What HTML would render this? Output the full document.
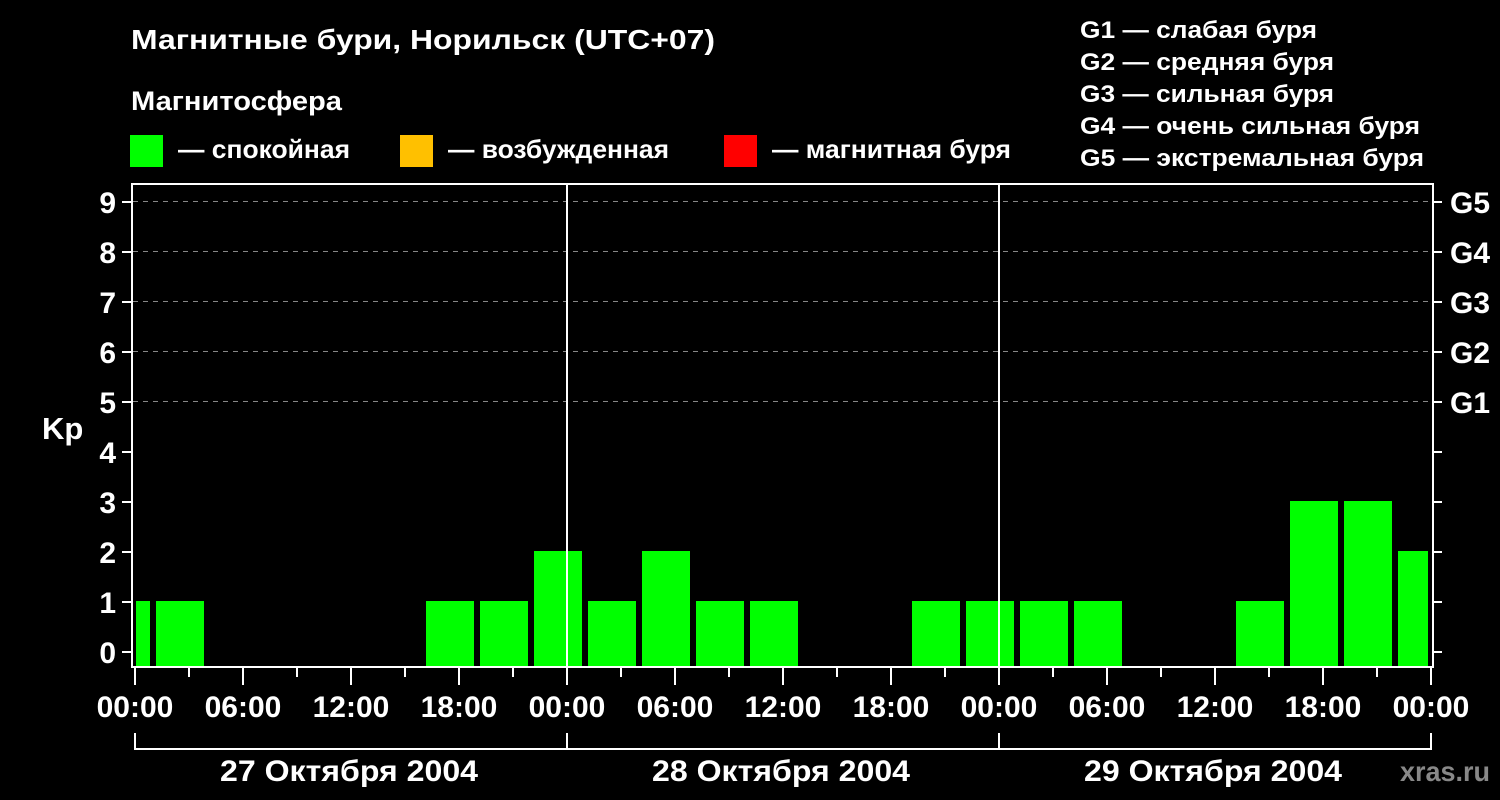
<!DOCTYPE html>
<html><head><meta charset="utf-8"><style>
html,body{margin:0;padding:0;background:#000;}
svg{display:block}
text{font-family:"Liberation Sans",Arial,sans-serif;font-weight:bold;fill:#fff}
</style></head><body>
<svg width="1500" height="800" viewBox="0 0 1500 800" xmlns="http://www.w3.org/2000/svg">
<rect width="1500" height="800" fill="#000"/>
<text x="131" y="49" font-size="28" textLength="584" lengthAdjust="spacingAndGlyphs">Магнитные бури, Норильск (UTC+07)</text>
<text x="131" y="110" font-size="27" textLength="211" lengthAdjust="spacingAndGlyphs">Магнитосфера</text>
<rect x="130" y="135" width="33" height="32" fill="#00ff00"/>
<text x="178" y="158" font-size="26" textLength="172" lengthAdjust="spacingAndGlyphs">— спокойная</text>
<rect x="400" y="135" width="33" height="32" fill="#ffc000"/>
<text x="448" y="158" font-size="26" textLength="221" lengthAdjust="spacingAndGlyphs">— возбужденная</text>
<rect x="724" y="135" width="33" height="32" fill="#ff0000"/>
<text x="772" y="158" font-size="26" textLength="239" lengthAdjust="spacingAndGlyphs">— магнитная буря</text>
<g font-size="24">
<text x="1080" y="38" textLength="237" lengthAdjust="spacingAndGlyphs">G1 — слабая буря</text>
<text x="1080" y="70" textLength="254" lengthAdjust="spacingAndGlyphs">G2 — средняя буря</text>
<text x="1080" y="102" textLength="254" lengthAdjust="spacingAndGlyphs">G3 — сильная буря</text>
<text x="1080" y="134" textLength="340" lengthAdjust="spacingAndGlyphs">G4 — очень сильная буря</text>
<text x="1080" y="166" textLength="344" lengthAdjust="spacingAndGlyphs">G5 — экстремальная буря</text>
</g>
<g stroke="#888" stroke-width="1" stroke-dasharray="5,5">
<line x1="133" y1="201.5" x2="1433" y2="201.5"/>
<line x1="133" y1="251.5" x2="1433" y2="251.5"/>
<line x1="133" y1="301.5" x2="1433" y2="301.5"/>
<line x1="133" y1="351.5" x2="1433" y2="351.5"/>
<line x1="133" y1="401.5" x2="1433" y2="401.5"/>
</g>
<g fill="#00ff00">
<rect x="136" y="601" width="14" height="66"/>
<rect x="156" y="601" width="48" height="66"/>
<rect x="426" y="601" width="48" height="66"/>
<rect x="480" y="601" width="48" height="66"/>
<rect x="534" y="551" width="48" height="116"/>
<rect x="588" y="601" width="48" height="66"/>
<rect x="642" y="551" width="48" height="116"/>
<rect x="696" y="601" width="48" height="66"/>
<rect x="750" y="601" width="48" height="66"/>
<rect x="912" y="601" width="48" height="66"/>
<rect x="966" y="601" width="48" height="66"/>
<rect x="1020" y="601" width="48" height="66"/>
<rect x="1074" y="601" width="48" height="66"/>
<rect x="1236" y="601" width="48" height="66"/>
<rect x="1290" y="501" width="48" height="166"/>
<rect x="1344" y="501" width="48" height="166"/>
<rect x="1398" y="551" width="30" height="116"/>
</g>
<g stroke="#fff" stroke-width="2" fill="none">
<line x1="131" y1="184" x2="1434" y2="184"/>
<line x1="132" y1="183" x2="132" y2="668"/>
<line x1="1433" y1="183" x2="1433" y2="668"/>
<line x1="131" y1="667" x2="1434" y2="667"/>
<line x1="567" y1="183" x2="567" y2="667"/>
<line x1="999" y1="183" x2="999" y2="667"/>
</g>
<g stroke="#fff" stroke-width="2">
<line x1="122" y1="202" x2="131" y2="202"/><line x1="1434" y1="202" x2="1442" y2="202"/>
<line x1="122" y1="252" x2="131" y2="252"/><line x1="1434" y1="252" x2="1442" y2="252"/>
<line x1="122" y1="302" x2="131" y2="302"/><line x1="1434" y1="302" x2="1442" y2="302"/>
<line x1="122" y1="352" x2="131" y2="352"/><line x1="1434" y1="352" x2="1442" y2="352"/>
<line x1="122" y1="402" x2="131" y2="402"/><line x1="1434" y1="402" x2="1442" y2="402"/>
<line x1="122" y1="452" x2="131" y2="452"/><line x1="1434" y1="452" x2="1442" y2="452"/>
<line x1="122" y1="502" x2="131" y2="502"/><line x1="1434" y1="502" x2="1442" y2="502"/>
<line x1="122" y1="552" x2="131" y2="552"/><line x1="1434" y1="552" x2="1442" y2="552"/>
<line x1="122" y1="602" x2="131" y2="602"/><line x1="1434" y1="602" x2="1442" y2="602"/>
<line x1="122" y1="652" x2="131" y2="652"/><line x1="1434" y1="652" x2="1442" y2="652"/>
</g>
<g stroke="#fff" stroke-width="2">
<line x1="135" y1="668" x2="135" y2="685"/><line x1="189" y1="668" x2="189" y2="677"/>
<line x1="243" y1="668" x2="243" y2="685"/><line x1="297" y1="668" x2="297" y2="677"/>
<line x1="351" y1="668" x2="351" y2="685"/><line x1="405" y1="668" x2="405" y2="677"/>
<line x1="459" y1="668" x2="459" y2="685"/><line x1="513" y1="668" x2="513" y2="677"/>
<line x1="567" y1="668" x2="567" y2="685"/><line x1="621" y1="668" x2="621" y2="677"/>
<line x1="675" y1="668" x2="675" y2="685"/><line x1="729" y1="668" x2="729" y2="677"/>
<line x1="783" y1="668" x2="783" y2="685"/><line x1="837" y1="668" x2="837" y2="677"/>
<line x1="891" y1="668" x2="891" y2="685"/><line x1="945" y1="668" x2="945" y2="677"/>
<line x1="999" y1="668" x2="999" y2="685"/><line x1="1053" y1="668" x2="1053" y2="677"/>
<line x1="1107" y1="668" x2="1107" y2="685"/><line x1="1161" y1="668" x2="1161" y2="677"/>
<line x1="1215" y1="668" x2="1215" y2="685"/><line x1="1269" y1="668" x2="1269" y2="677"/>
<line x1="1323" y1="668" x2="1323" y2="685"/><line x1="1377" y1="668" x2="1377" y2="677"/>
<line x1="1431" y1="668" x2="1431" y2="685"/>
<line x1="135" y1="749" x2="1431" y2="749"/>
<line x1="135" y1="733" x2="135" y2="750"/>
<line x1="567" y1="733" x2="567" y2="750"/>
<line x1="999" y1="733" x2="999" y2="750"/>
<line x1="1431" y1="733" x2="1431" y2="750"/>
</g>
<g font-size="30" text-anchor="end">
<text x="116" y="213">9</text><text x="116" y="263">8</text><text x="116" y="313">7</text>
<text x="116" y="363">6</text><text x="116" y="413">5</text><text x="116" y="463">4</text>
<text x="116" y="513">3</text><text x="116" y="563">2</text><text x="116" y="613">1</text>
<text x="116" y="663">0</text>
</g>
<g font-size="30">
<text x="1450" y="213">G5</text><text x="1450" y="263">G4</text><text x="1450" y="313">G3</text>
<text x="1450" y="363">G2</text><text x="1450" y="413">G1</text>
<text x="42" y="439" font-size="31">Kp</text>
</g>
<g font-size="30" text-anchor="middle">
<text x="135" y="717">00:00</text><text x="243" y="717">06:00</text><text x="351" y="717">12:00</text>
<text x="459" y="717">18:00</text><text x="567" y="717">00:00</text><text x="675" y="717">06:00</text>
<text x="783" y="717">12:00</text><text x="891" y="717">18:00</text><text x="999" y="717">00:00</text>
<text x="1107" y="717">06:00</text><text x="1215" y="717">12:00</text><text x="1323" y="717">18:00</text>
<text x="1431" y="717">00:00</text>
<text x="349" y="781" textLength="258" lengthAdjust="spacingAndGlyphs">27 Октября 2004</text>
<text x="781" y="781" textLength="258" lengthAdjust="spacingAndGlyphs">28 Октября 2004</text>
<text x="1213" y="781" textLength="258" lengthAdjust="spacingAndGlyphs">29 Октября 2004</text>
</g>
<text x="1400" y="781" font-size="28" textLength="90" lengthAdjust="spacingAndGlyphs" style="fill:#888">xras.ru</text>
</svg>
</body></html>
